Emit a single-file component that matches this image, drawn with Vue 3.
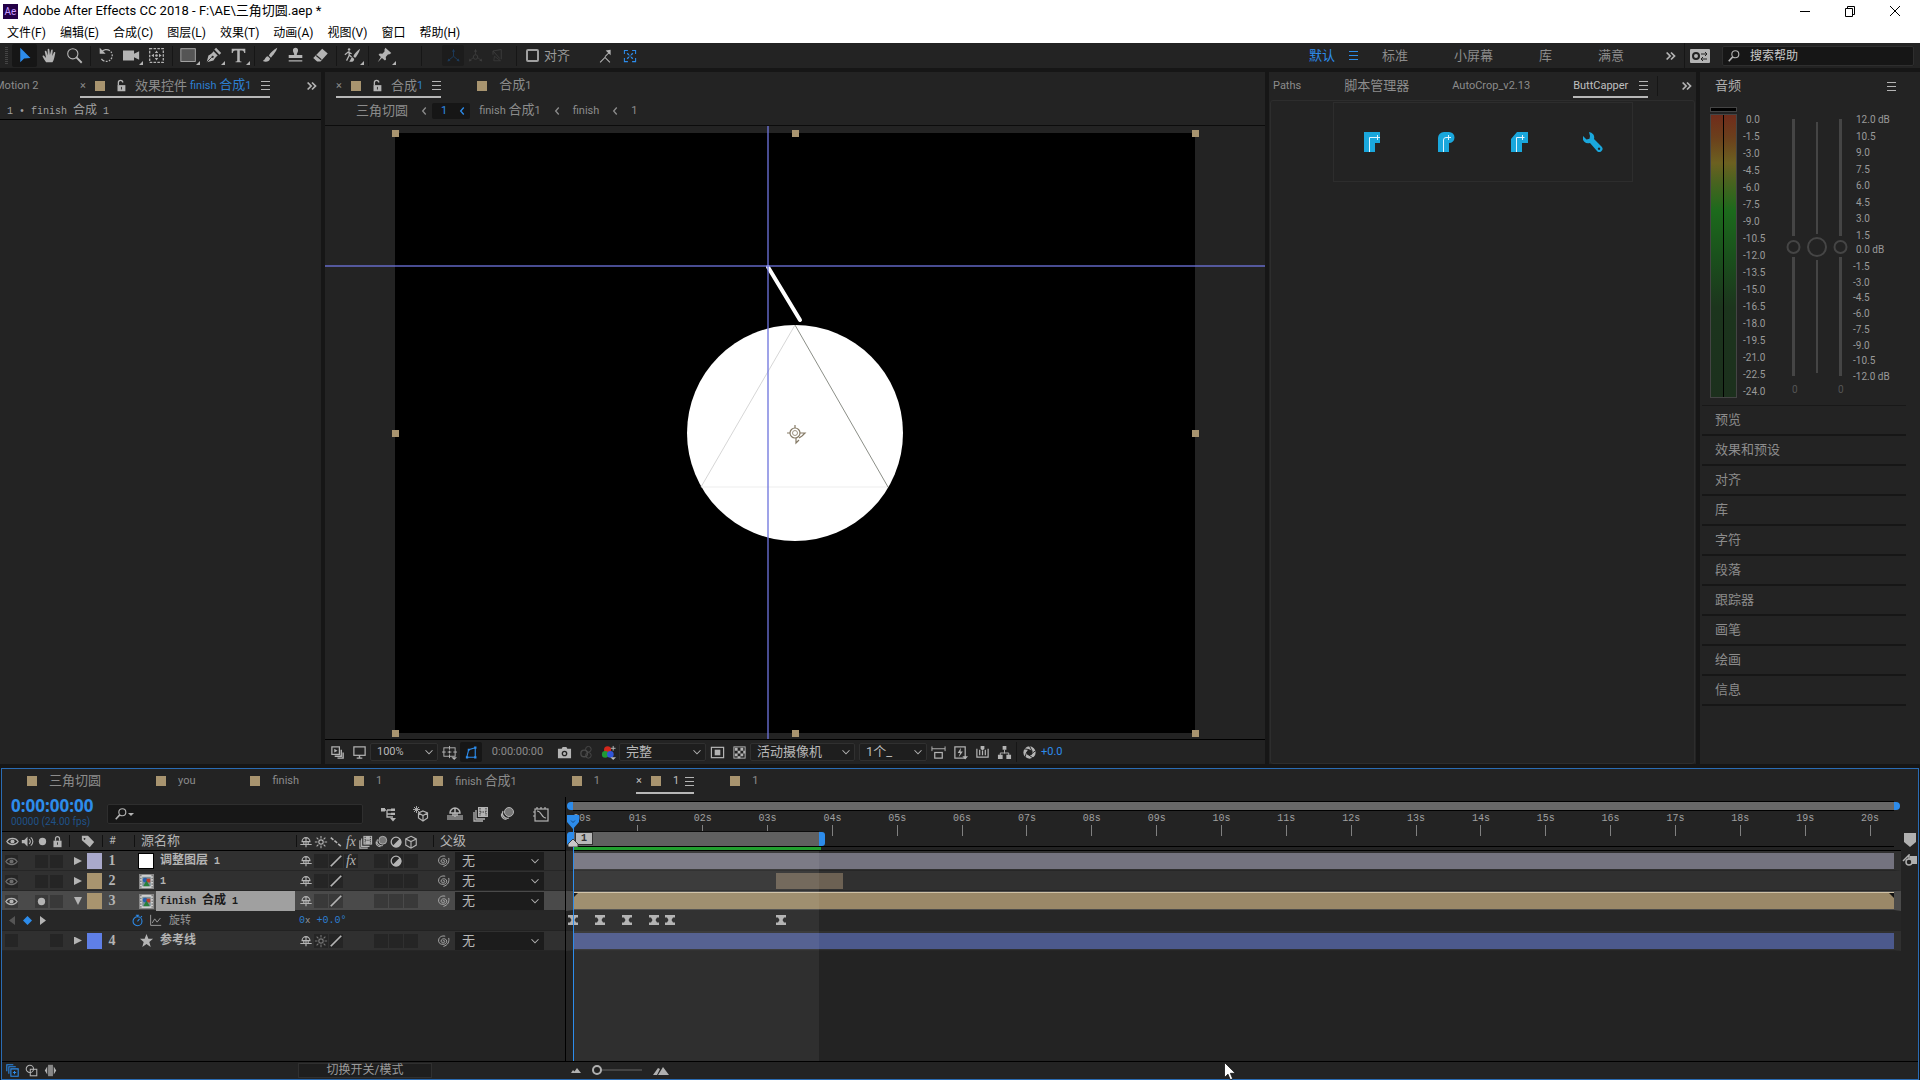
<script setup>
import { h, ref } from 'vue'

// 中文字符比西文大一号，拆开渲染
const Mix = (props) =>
  h(
    'span',
    { class: 'mix' },
    props.t
      .split(/([\u4e00-\u9fff]+)/)
      .filter(Boolean)
      .map((s) => h('span', { class: /[\u4e00-\u9fff]/.test(s) ? 'cn' : 'en' }, s))
  )
Mix.props = ['t']

const S = 'fill="none" stroke="currentColor"'

// 20x20 工具栏图标
const tools = {
  arrow: '<path d="M5 1v17l4.500-4.500 7.500-.5z" fill="currentColor"/>',
  hand: '<path d="M6 18c-1.500-2-3-4.500-4-6.500-.6-1.200.8-2 1.800-.9L6 13 4.500 5.500c-.2-1.300 1.500-1.600 1.900-.4L8 10 7.800 3c0-1.300 1.900-1.300 2 0L10.500 9.500 12 3.600c.3-1.200 2-.9 1.800.3L13.200 10.500l1.900-4c.5-1 2-.5 1.700.6-.7 3-1.300 8-3.300 10.900z" fill="currentColor"/>',
  zoom: `<circle cx="8" cy="8" r="6" ${S} stroke-width="1.300"/><path d="M12 12l6.500 6.500" ${S} stroke-width="2.200"/>`,
  rotate: `<path d="M4 6a7 7 0 1 1 0 8" ${S} stroke-width="1.500" stroke-dasharray="11 1.500 2 1.500 2 1.500 2 1.500 2 1.500 2 1.500"/><path d="M2 1v7h7z" fill="currentColor"/>`,
  camera: '<path d="M0 4h13v4l6-3v10l-6-3v4H0z" fill="currentColor"/>',
  pan: `<rect x="2" y="2" width="16" height="16" ${S} stroke-width="1.500" stroke-dasharray="3 1.500"/><path d="M10 4l2 3H8zM10 16l2-3H8zM4 10l3-2v4zM16 10l-3-2v4z" fill="currentColor"/><circle cx="10" cy="10" r="1.500" fill="currentColor"/>`,
  rect: `<rect x="1" y="2" width="17" height="15" fill="#555" stroke="currentColor"/>`,
  pen: `<path d="M2 18l2-8c2-1 5-3 6-5l5 5c-2 1-4 4-5 6z" fill="currentColor"/><path d="M11 3l2-2 6 6-2 2z" fill="currentColor"/><path d="M2 18l6-6" stroke="#232323" fill="none"/><circle cx="9" cy="11.500" r="1.300" fill="#232323"/>`,
  type: '<path d="M2 2h16v5h-1.300c-.3-2-.8-3-2.700-3h-2.500v11.500c0 1 .5 1.300 2 1.500v1h-7v-1c1.500-.2 2-.5 2-1.500V4H6C4 4 3.600 5 3.300 7H2z" fill="currentColor"/>',
  brush: '<path d="M18 1c-4 2-8 6-10 9l2.500 2.500C13 10 17 5 18 1zM7 11c-3 0-3 4-6 5.500 3 1.500 8 1 8.500-3z" fill="currentColor"/>',
  stamp: '<path d="M10 1a3 3 0 0 1 3 3c0 2-1.500 3-1.500 5.500H18V13H2V9.500h6.500C8.500 7 7 6 7 4a3 3 0 0 1 3-3zM2 15.500h16V17H2z" fill="currentColor"/>',
  eraser: '<path d="M12 2l6.500 5.500L10 17H6l-4.500-4z" fill="currentColor"/><path d="M5 10l6 5" stroke="#232323" fill="none" stroke-width="1.300"/>',
  roto: `<path d="M19 2c-3 2-7 6-8 9l2 2C15 11 18 6 19 2zM10 12c-2 0-2 4-4 5 3 1 6 0 6-3z" fill="currentColor"/><circle cx="6" cy="3" r="1.500" fill="currentColor"/><path d="M6 5v5l-3 6M6 9l3 3M1 9l4-3 4 2" ${S} stroke-width="1.500"/>`,
  pin: '<path d="M11 1l7 6-2 1.500-2 .2-2.500 3 .3 3L10.500 16 7 13l-5 5 3.700-6.200L3 9l1.500-1.300 3 .3L10 5.200V3z" fill="currentColor"/>',
  axis1: `<path d="M10 3v8L4 16M10 11l6 5" ${S} stroke-width="1.300"/><path d="M10 1l2 4H8zM2 18l1-4 3 3zM18 18l-1-4-3 3z" fill="currentColor"/>`,
  axis2: `<circle cx="10" cy="12" r="3" ${S} stroke-width="1.300"/><path d="M10 9V4M7 13l-4 3M13 13l4 3" ${S}/><path d="M10 1l2 4H8zM1 18l1-4 3 3zM19 18l-1-4-3 3z" fill="currentColor"/>`,
  axis3: `<path d="M4 4l11-2v13M4 4v5M4 4l9 10" ${S} stroke-width="1.300"/><path d="M6 11l8 6-9 0z" ${S}/>`,
  snap1: `<path d="M3 19l7-7 7 7M10 11l6-6" ${S} stroke-width="1.500"/><path d="M18 1v8l-7-7z" fill="currentColor"/>`,
  snap2: `<path d="M2 7V2h5M13 2h5v5M18 13v5h-5M7 18H2v-5" ${S} stroke-width="1.500"/><path d="M6 6l2.500 2.500M14 6l-2.500 2.500M6 14l2.500-2.500M14 14l-2.500-2.500" ${S} stroke-width="1.800"/><circle cx="10" cy="10" r="1" fill="currentColor"/>`,
}

// 16x16 小图标
const icons = {
  search: `<circle cx="9.500" cy="6" r="4" ${S} stroke-width="1.300"/><path d="M6.500 9L2 14" ${S} stroke-width="1.800"/>`,
  lockOpen: `<path d="M5 7V4a2.500 2.500 0 0 1 5 0" ${S} stroke-width="1.500"/><rect x="4" y="7" width="9" height="7" fill="currentColor"/><path d="M8.500 9v3" stroke="#232323"/>`,
  lock: `<path d="M5.500 7V4.500a2.500 2.500 0 0 1 5 0V7" ${S} stroke-width="1.500"/><rect x="3" y="7" width="10" height="8" fill="currentColor"/><path d="M8 9v3" stroke="#232323"/>`,
  more: `<path d="M3 4l4 4-4 4M8 4l4 4-4 4" ${S} stroke-width="2"/>`,
  left: `<path d="M10 4L6.500 8l3.500 4" ${S} stroke-width="1.500"/>`,
  down: `<path d="M4 6l4 4 4-4" ${S} stroke-width="1.200"/>`,
  always: `<rect x="2" y="2" width="8" height="8" ${S} stroke-width="1.300"/><path d="M12 5v7H5M14 8v6H8" ${S} stroke-width="1.500"/><path d="M4.500 4v4l3.500-2z" fill="currentColor"/>`,
  monitor: `<rect x="2" y="2" width="12" height="9" ${S} stroke-width="1.300"/><path d="M5 14h6M8 11v3" ${S} stroke-width="1.500"/>`,
  grid: `<rect x="2" y="3" width="12" height="9" ${S}/><path d="M8 1v4M8 10v4M0 7.500h4M12 7.500h4M6 7.500h4M8 6v3" ${S}/><path d="M10 13h6l-3 3z" fill="currentColor"/>`,
  mask: `<path d="M3 13l2-8 7-2v10z" ${S} stroke-width="1.200"/><path d="M2 12h2.500v2.500H2zM10.800 1.500h2.500V4h-2.500zM10.800 12h2.500v2.500h-2.500zM4 4h2v2H4z" fill="currentColor"/>`,
  photo: '<path d="M1 4h4l1-2h4l1 2h4v10H1z" fill="currentColor"/><circle cx="8" cy="9" r="3" fill="#232323"/><circle cx="8" cy="9" r="1.600" fill="currentColor"/>',
  ghost: `<circle cx="10" cy="4.500" r="3" ${S}/><circle cx="5.500" cy="9" r="3.500" ${S} stroke-width="1.500"/><circle cx="10" cy="11" r="3" ${S}/>`,
  rgb: '<circle cx="7" cy="5" r="3.800" fill="#d4281c"/><circle cx="4.500" cy="10" r="3.500" fill="#1f9a35"/><circle cx="10" cy="10" r="3.500" fill="#3155d8"/><path d="M13 1v5M10.500 3.500h5" stroke="#bbb"/><path d="M10 13h6l-3 3z" fill="#bbb"/>',
  roi: `<rect x="1.500" y="2.500" width="13" height="11" ${S} stroke-width="1.300"/><rect x="5" y="5" width="6" height="6" fill="currentColor"/>`,
  checker: `<rect x="2" y="2" width="12" height="12" ${S}/><path d="M3 3h3v3H3zM9 3h3v3H9zM6 6h3v3H6zM12 6h2v3h-2zM3 9h3v3H3zM9 9h3v3H9zM6 12h3v2H6z" fill="currentColor"/>`,
  aspect: `<path d="M1 4h14M1 1.500v5M15 1.500v5" ${S}/><rect x="4" y="8" width="8" height="6" ${S} stroke-width="1.300"/>`,
  fast: `<rect x="2" y="2" width="11" height="12" ${S} stroke-width="1.300"/><path d="M8.500 3L5 8.500h2.500L6 13l4.500-6H8z" fill="currentColor"/><path d="M10 12h6l-3 3.500z" fill="currentColor"/>`,
  timelineBtn: `<path d="M2 4v9h12V4M5 5v6M8 6v5M11 5v6" ${S} stroke-width="1.300"/><path d="M6 1h4v3L8 6 6 4z" fill="currentColor"/>`,
  flow: `<path d="M8 5v4M3.500 11V8.500h9V11" ${S}/><path d="M6 1h4v4H6zM1 10.500h5v4.500H1zM10 10.500h5v4.500h-5z" fill="currentColor"/>`,
  shutter: `<circle cx="8" cy="8" r="4.800" ${S} stroke-width="3.500"/><path d="M8 1l3 6M14.500 6l-5 4M12 14l-5-3.500M3 13.500l2-6M2 4l6 1" stroke="#232323"/>`,
  treeBtn: `<path d="M1 4h5M7 4h7M7 4v7h6M7 8h6" ${S} stroke-width="1.300"/><path d="M1 2h4v3.500H1zM11 2.500h4V5h-4zM11 6.700h4V9h-4z" fill="currentColor"/><path d="M10 12h6l-3 3.500z" fill="currentColor"/>`,
  draft3d: `<path d="M10 5l4.500 2v5L10 15l-4.500-3V7zM5.500 7L10 9.500 14.500 7M10 9.500V15" ${S} stroke-width="1.200"/><path d="M3.500 0v7M0 3.500h7M1 1l5 5M6 1L1 6" ${S} stroke-width=".9"/>`,
  shyBig: `<path d="M3 7a5 5 0 0 1 10 0zM8 2v9M6 7v3M10 7v3" ${S} stroke-width="1.500"/><rect x="0" y="9" width="16" height="5" fill="currentColor" opacity=".6"/>`,
  blend: `<path d="M5 1h10v10H5z" fill="currentColor"/><path d="M3 4v9h9M1 6v9h9" ${S} stroke-width="1.300"/><path d="M7 2v8M13 2v8M7 6h6" stroke="#333" stroke-dasharray="1.500 1"/>`,
  blur: `<circle cx="10" cy="6" r="4.500" fill="#777" stroke="currentColor"/><path d="M4 5a5 5 0 0 0 6 7M2.500 7.500a5 5 0 0 0 5 6" ${S} stroke-width="1.200"/>`,
  graph: `<rect x="2" y="3" width="13" height="12" ${S} stroke-width="1.200"/><path d="M4 5c5 0 4 7 9 7M4 1v2M8 1v2M12 1v2M0 6h2M0 10h2" ${S} stroke-width="1.200"/>`,
  eye: `<path d="M1 8c3-5 11-5 14 0-3 5-11 5-14 0z" ${S} stroke-width="1.500"/><circle cx="8" cy="8" r="2.500" fill="currentColor"/>`,
  sound: `<path d="M1 6h3l4-4v12l-4-4H1z" fill="currentColor"/><path d="M10 5c2 2 2 4 0 6M12 3c3.500 3 3.500 7 0 10" ${S} stroke-width="1.300"/>`,
  dot: '<circle cx="8" cy="8" r="4.500" fill="currentColor"/>',
  tag: '<path d="M1 2h7l7 7-5 6-9-8zM4 4.500a1 1 0 1 0 .1 0z" fill="currentColor" fill-rule="evenodd"/>',
  shy: `<path d="M3.500 7.500a4.500 4.500 0 0 1 9 0zM8 3v11M5.500 8v2.500M10.500 8v2.500M1.500 10.800h13" ${S} stroke-width="1.300"/>`,
  sun: `<circle cx="8" cy="8" r="2.500" ${S} stroke-width="1.300"/><path d="M8 1v3M8 12v3M1 8h3M12 8h3M3 3l2 2M11 11l2 2M13 3l-2 2M5 11l-2 2" ${S} stroke-width="1.200"/>`,
  dash: `<path d="M2 3l12 10" ${S} stroke-width="1.800" stroke-dasharray="4 1.500"/>`,
  slash: `<path d="M2 14L14 2" ${S} stroke-width="2"/>`,
  adjust: `<circle cx="8" cy="8" r="5.500" ${S} stroke-width="1.500"/><path d="M12.500 4A6 6 0 0 1 4 12.500z" fill="currentColor"/>`,
  cube: `<path d="M8 1.500l6 3v7l-6 3.500-6-3.500v-7zM2 4.500l6 3 6-3M8 7.500V15" ${S} stroke-width="1.300"/>`,
  spiral: `<path d="M8 8.500c-.3-1.600 2-1.600 2 0 0 2.200-4.200 2.200-4.200-.5C5.800 4.800 12 4.300 12.200 8.300 12.300 13 3.800 13 3 8.500 2.300 3.500 7 1.500 10.500 2.500M14.500 4.500c1 4-1 8.500-6 9.700" ${S}/>`,
  comp: `<rect x=".5" y=".5" width="15" height="15" fill="#cfcfcf" stroke="#888"/><path d="M2 1v14M14 1v14" stroke="#444" stroke-dasharray="1.500 1.500"/><rect x="3.500" y="3" width="9" height="10" fill="#7a8f99"/><circle cx="6.500" cy="6.500" r="2.500" fill="#2b5fae"/><path d="M8 5h4v4H8z" fill="#b8402c"/><path d="M8 7l3.500 6h-7z" fill="#27803b"/>`,
  star: '<path d="M8 1l2 5h5l-4 3.500 1.500 5.500L8 11.800 3.500 15 5 9.500 1 6h5z" fill="currentColor"/>',
  watch: `<circle cx="8" cy="9" r="5.500" ${S} stroke-width="1.300"/><path d="M8 9l2.500-3M6 1.500h4M8 1.500v2M12 4l1.500-1.500" ${S} stroke-width="1.300"/>`,
  curve: `<path d="M2 1v13h13M4 11l3-5 3 4 4-5" ${S} stroke-width="1.200"/>`,
  toggle1: `<path d="M6 6h9v9H6z" ${S} stroke-width="1.300"/><path d="M3.500 12V3.500H12M1 9V1h8M8.500 10.500h4M10.500 8.500v4" ${S} stroke-width="1.300"/>`,
  toggle2: `<circle cx="6" cy="6" r="4.500" ${S} stroke-width="1.300"/><rect x="6.500" y="6.500" width="8" height="8" ${S} stroke-width="1.300"/>`,
  toggle3: '<path d="M5 1h6v14H5z" fill="currentColor" opacity=".7"/><path d="M4 3v10L1 8zM12 3v10l3-5z" fill="currentColor"/>',
}

const menus = ['文件(F)', '编辑(E)', '合成(C)', '图层(L)', '效果(T)', '动画(A)', '视图(V)', '窗口', '帮助(H)']
const toolGroups = [
  [['arrow', '选取', 0], ['hand', '手形', 0], ['zoom', '缩放', 0]],
  [['rotate', '旋转', 0], ['camera', '摄像机', 1], ['pan', '锚点', 0]],
  [['rect', '矩形', 1], ['pen', '钢笔', 1], ['type', '文字', 1]],
  [['brush', '画笔', 0], ['stamp', '仿制图章', 0], ['eraser', '橡皮擦', 0]],
  [['roto', 'Roto 笔刷', 1]],
  [['pin', '操控点', 1]],
]
const workspaces = ['标准', '小屏幕', '库', '满意']
const meterLabels = Array.from({ length: 17 }, (_, i) => (i * -1.5).toFixed(1).replace('-0.0', '0.0'))
const gainUp = ['12.0 dB', '10.5', '9.0', '7.5', '6.0', '4.5', '3.0', '1.5']
const gainDown = ['-1.5', '-3.0', '-4.5', '-6.0', '-7.5', '-9.0', '-10.5', '-12.0 dB']
const sections = ['预览', '效果和预设', '对齐', '库', '字符', '段落', '跟踪器', '画笔', '绘画', '信息']

const compTabs = ['三角切圆', 'you', 'finish', '1', 'finish 合成1', '1', '1', '1']
const activeTab = ref(6)

const handles = [[0, 0], [400, 0], [800, 0], [0, 300], [800, 300], [0, 600], [400, 600], [800, 600]]

// 时间轴总长（秒）
const duration = 20.37
const pct = (t) => (t / duration) * 100 + '%'
const seconds = Array.from({ length: 21 }, (_, i) => i)
const workEnd = 3.8
const keys = [0, 0.42, 0.83, 1.25, 1.5, 3.21]

const layers = [
  { n: 1, name: '调整图层 1', color: '#a9a9cb', bar: '#74737f', start: 0, end: duration, eye: 'dim', kind: 'solid', sw: ['shy', 'box', 'slash', 'fx', '', 'box', 'adjust', 'box'] },
  { n: 2, name: '1', color: '#a8946f', bar: '#6c6153', start: 3.13, end: 4.16, eye: 'dim', kind: 'comp', sw: ['shy', 'box', 'slash', '', '', 'box', 'box', 'box'] },
  { n: 3, name: 'finish 合成 1', color: '#a8946f', bar: '#9a8868', start: 0, end: duration, eye: 'on', solo: true, open: true, kind: 'comp', sw: ['shy', 'box', 'slash', '', '', 'box', 'box', 'box'] },
  { n: 4, name: '参考线', color: '#5f7fe6', bar: '#4c598c', start: 0, end: duration, eye: 'off', kind: 'star', sw: ['shy', 'sun', 'slash', '', '', 'box', 'box', 'box'] },
]
const headSwitches = ['shy', 'sun', 'dash', 'fx', 'blend', 'blur', 'adjust', 'cube']
</script>

<template>
  <div class="app">
    <header class="title">
      <span class="logo">Ae</span>
      <span class="title-text">Adobe After Effects CC 2018 - F:\AE\三角切圆.aep *</span>
      <div class="win">
        <button aria-label="最小化"><svg viewBox="0 0 12 12"><path d="M1 6.500h10" stroke="#000" /></svg></button>
        <button aria-label="还原"><svg viewBox="0 0 12 12"><path d="M1.500 3.500h7v8h-7zM3.500 3V1.500h7v8H9" fill="none" stroke="#000" /></svg></button>
        <button aria-label="关闭"><svg viewBox="0 0 12 12"><path d="M1 1l10 10M11 1L1 11" stroke="#000" /></svg></button>
      </div>
    </header>

    <nav class="menubar">
      <button v-for="m in menus" :key="m">{{ m }}</button>
    </nav>

    <div class="toolbar">
      <span class="grip"></span>
      <template v-for="(g, gi) in toolGroups" :key="gi">
        <span v-if="gi" class="sep"></span>
        <button v-for="t in g" :key="t[0]" class="tool" :class="{ active: t[0] === 'arrow' }" :aria-label="t[1]">
          <svg viewBox="0 0 20 20" v-html="tools[t[0]]"></svg>
          <i v-if="t[2]" class="corner"></i>
        </button>
      </template>
      <span class="sep wide"></span>
      <button class="axis boxed" aria-label="本地轴"><svg viewBox="0 0 20 20" v-html="tools.axis1"></svg></button>
      <button class="axis" aria-label="世界轴"><svg viewBox="0 0 20 20" v-html="tools.axis2"></svg></button>
      <button class="axis" aria-label="视图轴"><svg viewBox="0 0 20 20" v-html="tools.axis3"></svg></button>
      <span class="sep tail"></span>
      <label class="snap"><input type="checkbox" /><span class="cn">对齐</span></label>
      <button class="tool" aria-label="边缘对齐"><svg class="s14" viewBox="0 0 20 20" v-html="tools.snap1"></svg></button>
      <button class="tool blue" aria-label="特征对齐"><svg class="s14" viewBox="0 0 20 20" v-html="tools.snap2"></svg></button>

      <div class="spaces">
        <button class="cn current">默认</button>
        <span class="burger blue"></span>
        <button v-for="w in workspaces" :key="w" class="cn">{{ w }}</button>
      </div>
      <button class="chev" aria-label="更多工作区"><svg class="ic" viewBox="0 0 16 16" v-html="icons.more"></svg></button>
      <span class="sep full"></span>
      <button class="sync" aria-label="同步设置">
        <svg viewBox="0 0 20 14"><rect width="20" height="14" rx="1" fill="#b4b4b4" /><circle cx="6" cy="7" r="3" fill="none" stroke="#232323" stroke-width="2" /><path d="M11 5h6M15 3l2 2-2 2M17 10h-6M13 8l-2 2 2 2" fill="none" stroke="#232323" /></svg>
      </button>
      <label class="help">
        <svg class="ic" viewBox="0 0 16 16" v-html="icons.search"></svg>
        <input type="text" placeholder="搜索帮助" aria-label="搜索帮助" />
      </label>
    </div>

    <main class="panels">
      <section class="panel effects">
        <div class="tabs">
          <button class="ptab cut">Motion 2</button>
          <div class="ptab on">
            <span class="x">×</span><i class="sw"></i>
            <svg class="ic lk" viewBox="0 0 16 16" v-html="icons.lockOpen"></svg>
            <span class="cn">效果控件</span><Mix class="hi" t="finish 合成1" />
            <span class="burger"></span>
          </div>
          <button class="chev end" aria-label="更多面板"><svg class="ic" viewBox="0 0 16 16" v-html="icons.more"></svg></button>
        </div>
        <p class="fx-target"><Mix class="mono" t="1 • finish 合成 1" /></p>
      </section>

      <section class="panel viewer">
        <div class="tabs">
          <div class="ptab on">
            <span class="x">×</span><i class="sw"></i>
            <svg class="ic lk" viewBox="0 0 16 16" v-html="icons.lockOpen"></svg>
            <span class="cn">合成</span><b class="one">1</b>
            <span class="burger"></span>
          </div>
          <button class="ptab second"><i class="sw"></i><Mix t="合成1" /></button>
        </div>
        <nav class="crumbs">
          <a href="#" class="cn">三角切圆</a>
          <svg class="ic" viewBox="0 0 16 16" v-html="icons.left"></svg>
          <a href="#" class="here">1<svg class="ic" viewBox="0 0 16 16" v-html="icons.left"></svg></a>
          <a href="#"><Mix t="finish 合成1" /></a>
          <svg class="ic" viewBox="0 0 16 16" v-html="icons.left"></svg>
          <a href="#">finish</a>
          <svg class="ic" viewBox="0 0 16 16" v-html="icons.left"></svg>
          <a href="#">1</a>
        </nav>

        <div class="stage">
          <svg class="comp" viewBox="0 0 800 600">
            <rect width="800" height="600" fill="#000" />
            <circle cx="400" cy="300" r="108" fill="#fff" />
            <path d="M400 192L306 354" stroke="#ccc" stroke-width=".8" />
            <path d="M306 354h187" stroke="#e8e8e8" stroke-width=".8" />
            <path d="M400 192l93 162" stroke="#8c8f88" />
            <path d="M373 134l32 53" stroke="#fff" stroke-width="4" stroke-linecap="round" />
            <g fill="none" stroke="#857a66" stroke-width="1.200">
              <circle cx="400" cy="300" r="5" />
              <circle cx="400" cy="300" r="2.500" stroke-width=".8" />
              <path d="M400 292v3M392 300h3M405 300h5l-3 3M401 305v5l3-3M404 305l3-2" />
            </g>
            <rect v-for="(p, i) in handles" :key="i" :x="p[0] - 3" :y="p[1] - 3" width="7" height="7" fill="#a8946f" />
          </svg>
          <i class="guide v"></i>
          <i class="guide h"></i>
        </div>

        <div class="vbar">
          <button class="vb" aria-label="始终预览"><svg class="ic" viewBox="0 0 16 16" v-html="icons.always"></svg></button>
          <button class="vb" aria-label="主查看器"><svg class="ic" viewBox="0 0 16 16" v-html="icons.monitor"></svg></button>
          <div class="dd d1"><select aria-label="放大率"><option>100%</option></select><svg class="ic" viewBox="0 0 16 16" v-html="icons.down"></svg></div>
          <button class="vb" aria-label="网格"><svg class="ic" viewBox="0 0 16 16" v-html="icons.grid"></svg></button>
          <button class="vb blue boxed" aria-label="蒙版"><svg class="ic" viewBox="0 0 16 16" v-html="icons.mask"></svg></button>
          <button class="vtime">0:00:00:00</button>
          <button class="vb" aria-label="快照"><svg class="ic" viewBox="0 0 16 16" v-html="icons.photo"></svg></button>
          <button class="vb dim" aria-label="显示快照"><svg class="ic" viewBox="0 0 16 16" v-html="icons.ghost"></svg></button>
          <button class="vb" aria-label="通道"><svg class="ic" viewBox="0 0 16 16" v-html="icons.rgb"></svg></button>
          <div class="dd d2"><select class="cn" aria-label="分辨率"><option>完整</option></select><svg class="ic" viewBox="0 0 16 16" v-html="icons.down"></svg></div>
          <button class="vb" aria-label="目标区域"><svg class="ic" viewBox="0 0 16 16" v-html="icons.roi"></svg></button>
          <button class="vb" aria-label="透明网格"><svg class="ic" viewBox="0 0 16 16" v-html="icons.checker"></svg></button>
          <div class="dd d3"><select class="cn" aria-label="3D 视图"><option>活动摄像机</option></select><svg class="ic" viewBox="0 0 16 16" v-html="icons.down"></svg></div>
          <div class="dd d1"><select class="cn" aria-label="视图布局"><option>1个_</option></select><svg class="ic" viewBox="0 0 16 16" v-html="icons.down"></svg></div>
          <button v-for="n in ['aspect', 'fast', 'timelineBtn', 'flow']" :key="n" class="vb" :aria-label="n"><svg class="ic" viewBox="0 0 16 16" v-html="icons[n]"></svg></button>
          <span class="sep"></span>
          <button class="vb" aria-label="重置曝光度"><svg class="ic" viewBox="0 0 16 16" v-html="icons.shutter"></svg></button>
          <button class="exposure">+0.0</button>
        </div>
      </section>

      <section class="panel scripts">
        <div class="tabs">
          <button class="ptab">Paths</button>
          <button class="ptab cn">脚本管理器</button>
          <button class="ptab">AutoCrop_v2.13</button>
          <div class="ptab on lit">ButtCapper<span class="burger"></span></div>
          <span class="tsep"></span>
          <button class="chev end" aria-label="更多面板"><svg class="ic" viewBox="0 0 16 16" v-html="icons.more"></svg></button>
        </div>
        <div class="script-body">
          <div class="caps">
            <button aria-label="平头端点"><svg viewBox="0 0 20 20"><path d="M2 0h16v11h-5v9H2z" fill="#1aa7dc" /><path d="M7.500 20V5.500H18M15.500 3v5" fill="none" stroke="#dff4ff" /></svg></button>
            <button aria-label="圆头端点"><svg viewBox="0 0 20 20"><path d="M2 20V6a6 6 0 0 1 6-6h5a5.500 5.500 0 0 1 0 11v9z" fill="#1aa7dc" /><path d="M7.500 20V8q0-2.500 2.500-2.500h5M12.500 3v5" fill="none" stroke="#dff4ff" /></svg></button>
            <button aria-label="斜角端点"><svg viewBox="0 0 20 20"><path d="M2 20V7l6-7h11v11h-6v9z" fill="#1aa7dc" /><path d="M7.500 20V5.500h8M13.500 3v5" fill="none" stroke="#dff4ff" /></svg></button>
            <button aria-label="设置"><svg viewBox="0 0 20 20"><path d="M6 0a5.500 5.500 0 0 1 5 7l7.500 7.500a3 3 0 0 1-4.500 4.500L7 11A5.500 5.500 0 0 1 0 4l3.500 3.500 3-.8L7 4zM16 15.500a1.200 1.200 0 1 0 .1 0z" fill="#1aa7dc" fill-rule="evenodd" /></svg></button>
          </div>
        </div>
      </section>

      <section class="panel side">
        <div class="tabs">
          <h2 class="cn">音频</h2>
          <span class="burger"></span>
        </div>
        <div class="audio">
          <div class="meter"><i class="clip"></i><i class="level"></i></div>
          <ul class="scale"><li v-for="l in meterLabels" :key="l">{{ l }}</li></ul>
          <svg class="faders" viewBox="0 0 70 284">
            <g stroke="#454545" fill="none">
              <path d="M10.500 5v117M10.500 143v119M57.500 5v117M57.500 143v119" stroke-width="3" />
              <path d="M34 8v112M34 146v113" stroke-width="2" />
              <circle cx="10.500" cy="133" r="6" stroke-width="2" />
              <circle cx="57.500" cy="133" r="6" stroke-width="2" />
              <circle cx="34" cy="133" r="9" stroke-width="2" />
            </g>
            <g class="zero"><text x="9" y="279">0</text><text x="55" y="279">0</text></g>
          </svg>
          <div class="gain">
            <ul class="up"><li v-for="l in gainUp" :key="l">{{ l }}</li></ul>
            <span>0.0 dB</span>
            <ul class="down"><li v-for="l in gainDown" :key="l">{{ l }}</li></ul>
          </div>
        </div>
        <div class="folded">
          <button v-for="s in sections" :key="s" class="cn">{{ s }}</button>
        </div>
      </section>
    </main>

    <section class="timeline">
      <div class="ctabs">
        <button v-for="(t, i) in compTabs" :key="i" class="ctab" :class="{ on: i === activeTab, short: t.length === 1 }" @click="activeTab = i">
          <span class="x">{{ i === activeTab ? '×' : '' }}</span><i class="sw"></i><Mix :t="t" />
          <span v-if="i === activeTab" class="burger"></span>
        </button>
      </div>

      <div class="tbody">
        <div class="outline">
          <div class="strip">
            <div class="clock"><strong>0:00:00:00</strong><small>00000 (24.00 fps)</small></div>
            <label class="find">
              <svg class="ic" viewBox="0 0 16 16" v-html="icons.search"></svg><i class="caret"></i>
              <input type="text" aria-label="搜索图层" />
            </label>
            <button v-for="n in ['treeBtn', 'draft3d', 'shyBig', 'blend', 'blur', 'graph']" :key="n" class="sbtn" :class="n" :aria-label="n">
              <svg viewBox="0 0 16 16" v-html="icons[n]"></svg>
            </button>
          </div>

          <div class="cols head">
            <div class="av">
              <svg v-for="n in ['eye', 'sound', 'dot', 'lock']" :key="n" class="ic" viewBox="0 0 16 16" v-html="icons[n]"></svg>
            </div>
            <div class="c-tag"><svg class="ic" viewBox="0 0 16 16" v-html="icons.tag"></svg></div>
            <div class="c-num">#</div>
            <div class="c-name cn">源名称</div>
            <div class="switches">
              <span v-for="n in headSwitches" :key="n"><em v-if="n === 'fx'">fx</em><svg v-else class="ic" viewBox="0 0 16 16" v-html="icons[n]"></svg></span>
            </div>
            <div class="c-parent cn">父级</div>
          </div>

          <template v-for="l in layers" :key="l.n">
            <div class="cols row" :class="{ sel: l.open }">
              <div class="av">
                <span class="box"><svg v-if="l.eye !== 'off'" class="ic" :class="l.eye" viewBox="0 0 16 16" v-html="icons.eye"></svg></span>
                <span></span>
                <span :class="{ box: l.eye !== 'off' }"><svg v-if="l.solo" class="ic" viewBox="0 0 16 16" v-html="icons.dot"></svg></span>
                <span class="box"></span>
              </div>
              <button class="twirl" :class="{ open: l.open }" aria-label="展开"></button>
              <i class="label" :style="{ background: l.color }"></i>
              <b class="num">{{ l.n }}</b>
              <div class="kind">
                <i v-if="l.kind === 'solid'" class="solid"></i>
                <svg v-else viewBox="0 0 16 16" v-html="icons[l.kind]"></svg>
              </div>
              <div class="lname"><Mix class="mono" :t="l.name" /></div>
              <div class="switches">
                <span v-for="(s, i) in l.sw" :key="i" :class="{ box: s && s !== 'shy', dim: s === 'sun' }">
                  <em v-if="s === 'fx'">fx</em>
                  <svg v-else-if="icons[s]" class="ic" viewBox="0 0 16 16" v-html="icons[s]"></svg>
                </span>
              </div>
              <div class="parent">
                <svg class="ic" viewBox="0 0 16 16" v-html="icons.spiral"></svg>
                <div class="dd"><select class="cn" aria-label="父级"><option>无</option></select><svg class="ic" viewBox="0 0 16 16" v-html="icons.down"></svg></div>
              </div>
            </div>
            <div v-if="l.open" class="prop">
              <div class="nav"><i class="prev"></i><i class="diamond"></i><i class="next"></i></div>
              <svg class="ic blue" viewBox="0 0 16 16" v-html="icons.watch"></svg>
              <svg class="ic" viewBox="0 0 16 16" v-html="icons.curve"></svg>
              <span class="pname">旋转</span>
              <button class="pval">0<small>x</small> +0.0°</button>
            </div>
          </template>
        </div>

        <div class="time">
          <div class="navbar"><i class="cap l"></i><i class="cap r"></i></div>
          <div class="ruler">
            <span v-for="s in seconds" :key="s" class="mark" :class="{ first: s === 0 }" :style="{ left: pct(s) }">{{ String(s).padStart(2, '0') }}s</span>
          </div>
          <div class="work">
            <div class="area" :style="{ width: pct(workEnd) }"><i class="cap l"></i><i class="cap r"></i><b class="flag">1</b></div>
          </div>
          <div class="cache"><i :style="{ width: pct(workEnd) }"></i></div>
          <div class="tracks">
            <div class="lit" :style="{ width: pct(workEnd) }"></div>
            <template v-for="l in layers" :key="l.n">
              <div class="track" :class="{ sel: l.open }">
                <i class="bar" :style="{ left: pct(l.start), width: pct(l.end - l.start), background: l.bar }"></i>
              </div>
              <div v-if="l.open" class="track keys">
                <svg v-for="k in keys" :key="k" class="key" viewBox="0 0 10 10" :style="{ left: pct(k) }"><path d="M0 0h10v2.500H8L6.500 5 8 7.500h2V10H0V7.500h2L3.500 5 2 2.500H0z" fill="#b0b0b0" /></svg>
              </div>
            </template>
          </div>
          <div class="needle">
            <svg viewBox="0 0 14 14"><path d="M1 0h12v7l-6 7-6-7z" fill="#2d8ceb" /><path d="M5 5.500l2 2 2-2" fill="none" stroke="#164a80" /></svg>
          </div>
          <svg class="house" viewBox="0 0 12 8"><path d="M1 8V5l5-5 5 5v3z" fill="#c8c8c8" stroke="#232323" stroke-width=".8" /></svg>
        </div>

        <div class="gutter">
          <svg viewBox="0 0 12 14"><path d="M0 0h12v9l-6 5-6-5z" fill="#b0b0b0" /></svg>
          <svg viewBox="0 0 15 12"><path d="M8 2h7v8H8z" fill="#b0b0b0" /><path d="M1 7l6-6v4" fill="none" stroke="#b0b0b0" stroke-width="1.500" /><circle cx="7" cy="8" r="3" fill="#232323" stroke="#b0b0b0" stroke-width="1.500" /></svg>
        </div>
      </div>

      <footer class="foot">
        <div class="toggles">
          <button class="blue" aria-label="图层开关"><svg class="ic" viewBox="0 0 16 16" v-html="icons.toggle1"></svg></button>
          <button aria-label="转换控制"><svg class="ic" viewBox="0 0 16 16" v-html="icons.toggle2"></svg></button>
          <button aria-label="入点出点"><svg class="ic" viewBox="0 0 16 16" v-html="icons.toggle3"></svg></button>
        </div>
        <button class="mode">切换开关/模式</button>
        <div class="zoomer">
          <svg class="small" viewBox="0 0 10 6"><path d="M0 6l2-3 1.500 1.500L6 1l4 5z" fill="#b0b0b0" /></svg>
          <input type="range" min="0" max="100" value="0" aria-label="时间缩放" />
          <svg class="big" viewBox="0 0 16 9"><path d="M0 9l5-7 2 1-3 6zM5 9l5-8 6 8z" fill="#b0b0b0" /></svg>
        </div>
      </footer>
    </section>

    <svg class="cursor" viewBox="0 0 12 19"><path d="M.5.5v15l3.500-3.300 2.300 5.600 2.400-1-2.300-5.500h5z" fill="#fff" stroke="#111" stroke-width=".8" /></svg>
  </div>
</template>

<style>
body {
  background: #161616;
  overflow: hidden;
}

.mix {
  white-space: pre;
}

.cn {
  font-size: 13px;
}

.mono .en {
  font-family: 'Liberation Mono', monospace;
  font-size: 10px;
}

.mono .cn {
  font-size: 12px;
}
</style>

<style scoped>
.app {
  display: flex;
  flex-direction: column;
  height: 100vh;
  background: #161616;
  color: #8c8c8c;
  font-family: Roboto, 'Noto Sans CJK SC', sans-serif;
  font-size: 11px;
  line-height: 16px;
}

button,
input,
select {
  font-family: inherit;
  font-size: inherit;
  line-height: inherit;
  color: inherit;
  background: none;
  border: 0;
  padding: 0;
  margin: 0;
}

a {
  color: inherit;
  text-decoration: none;
}

ul,
p,
h2 {
  margin: 0;
  padding: 0;
  list-style: none;
  font-weight: 400;
}

svg {
  display: block;
  flex: none;
}

button.cn,
select.cn {
  font-size: 13px;
}

.ic {
  width: 14px;
  height: 14px;
}

.blue {
  color: #2d8ceb;
}

.dim {
  color: #4a4a4a;
}

/* 标题栏 */
.title {
  display: flex;
  align-items: center;
  height: 22px;
  padding: 0 19px 0 3px;
  background: #fff;
  color: #000;
  font-size: 13px;
}

.logo {
  width: 15px;
  height: 15px;
  margin-right: 5px;
  background: #240046;
  color: #c79bff;
  font-size: 10px;
  line-height: 15px;
  text-align: center;
}

.win {
  display: flex;
  gap: 33px;
  margin-left: auto;
}

.win svg {
  width: 12px;
  height: 12px;
}

.menubar {
  display: flex;
  gap: 14px;
  height: 21px;
  padding-left: 7px;
  background: #fff;
  color: #000;
  font-size: 12px;
}

/* 工具栏 */
.toolbar {
  display: flex;
  align-items: center;
  height: 25px;
  margin-bottom: 4px;
  padding: 0 6px 0 5px;
  background: #232323;
  color: #b4b4b4;
}

.grip {
  width: 3px;
  height: 18px;
  margin-right: 4px;
  background: repeating-linear-gradient(#444 0 1px, #232323 1px 2px);
}

.sep {
  flex: none;
  width: 1px;
  height: 20px;
  margin: 0 3px;
  background: #161616;
}

.sep.wide {
  margin: 0 20px 0 24px;
}

.sep.tail {
  margin: 0 9px 0 8px;
}

.sep.full {
  height: 25px;
  margin: 0 5px 0 6px;
}

.tool {
  position: relative;
  display: flex;
  justify-content: center;
  align-items: center;
  width: 25px;
  height: 23px;
}

.tool svg {
  width: 17px;
  height: 17px;
}

.tool .s14 {
  width: 14px;
  height: 14px;
}

.tool.active {
  background: #161616;
  border-radius: 2px;
  color: #2d8ceb;
}

.corner {
  position: absolute;
  right: 1px;
  bottom: 2px;
  border: 2px solid #b4b4b4;
  border-top-color: transparent;
  border-left-color: transparent;
}

.axis {
  display: flex;
  justify-content: center;
  align-items: center;
  width: 22px;
  height: 21px;
  color: #3c3c3c;
}

.axis svg {
  width: 15px;
  height: 15px;
}

.axis.boxed {
  background: #1c1c1c;
  border-radius: 2px;
  color: #1c3b5c;
}

.snap {
  display: flex;
  align-items: center;
  gap: 5px;
  margin-right: 22px;
  color: #9a9a9a;
}

.snap input {
  appearance: none;
  width: 13px;
  height: 13px;
  border: 2px solid #a0a0a0;
  border-radius: 2px;
}

.spaces {
  display: flex;
  align-items: center;
  gap: 46px;
  margin-left: auto;
  margin-right: 40px;
  color: #8c8c8c;
}

.spaces .current {
  margin-right: -32px;
  color: #2d8ceb;
}

.spaces .burger {
  margin: 0 -22px 0 0;
}

.burger {
  flex: none;
  width: 9px;
  height: 9px;
  background: repeating-linear-gradient(#b4b4b4 0 1px, transparent 1px 4px);
}

.burger.blue {
  background: repeating-linear-gradient(#2d8ceb 0 1px, transparent 1px 4px);
}

.chev {
  color: #b4b4b4;
}

.sync svg {
  width: 20px;
  height: 14px;
}

.help {
  display: flex;
  align-items: center;
  gap: 9px;
  width: 186px;
  height: 18px;
  margin-left: 12px;
  padding-left: 4px;
  border: 1px solid #2e2e2e;
  border-radius: 2px;
  background: #161616;
}

.help input {
  flex: 1;
  min-width: 0;
  font-size: 12px;
}

.help input::placeholder {
  color: #c8c8c8;
}

/* 上方面板 */
.panels {
  flex: 1;
  min-height: 0;
  display: flex;
  gap: 4px;
}

.panel {
  display: flex;
  flex-direction: column;
  min-width: 0;
  background: #232323;
}

.effects {
  width: 321px;
}

.viewer {
  flex: 1;
}

.scripts {
  width: 427px;
}

.side {
  width: 220px;
}

.tabs {
  display: flex;
  flex: none;
  align-items: center;
  height: 28px;
  overflow: hidden;
}

.ptab {
  display: flex;
  align-items: center;
  height: 28px;
  box-sizing: border-box;
  border-bottom: 2px solid transparent;
  margin-bottom: 2px;
  padding-top: 3px;
  white-space: nowrap;
}

.ptab.on,
.ctab.on {
  border-bottom-color: #b8b8b8;
}

.ptab.on {
  height: 26px;
}

.ptab .burger {
  margin-left: 9px;
}

.ctab .burger {
  margin-left: 6px;
}

.x {
  width: 15px;
  font-size: 11px;
  text-align: left;
}

.sw {
  flex: none;
  width: 10px;
  height: 10px;
  background: #a8946f;
}

.lk {
  margin: 0 7px 0 9px;
  color: #b4b4b4;
}

.cut {
  margin-left: -5px;
  width: 85px;
}

.hi {
  margin-left: 3px;
  color: #2d7fd2;
}

.one {
  color: #2d7fd2;
  font-weight: 400;
}

.end {
  margin-left: auto;
  padding-right: 2px;
}

.fx-target {
  height: 18px;
  padding: 1px 7px 0;
  border-bottom: 1px solid #000;
  line-height: 18px;
  color: #a0a0a0;
}

.viewer .tabs {
  padding-left: 11px;
}

.second {
  margin-left: 36px;
}

.second .sw {
  margin-right: 12px;
}

.crumbs {
  display: flex;
  flex: none;
  align-items: center;
  gap: 9px;
  height: 21px;
  padding: 0 31px 4px;
  border-bottom: 1px solid #0c0c0c;
}

.crumbs .here {
  display: flex;
  align-items: center;
  gap: 8px;
  padding: 0 1px 0 9px;
  margin-left: -8px;
  border-radius: 2px;
  background: #161616;
  color: #2d8ceb;
}

.stage {
  position: relative;
  flex: 1;
  min-height: 0;
  display: flex;
  justify-content: center;
  align-items: center;
  overflow: hidden;
  border-bottom: 1px solid #000;
}

.comp {
  width: 800px;
  height: 600px;
  overflow: visible;
}

.guide {
  position: absolute;
  background: rgba(110, 115, 220, 0.66);
}

.guide.v {
  top: 0;
  bottom: 0;
  left: calc(50% - 28px);
  width: 2px;
}

.guide.h {
  left: 0;
  right: 0;
  top: calc(50% - 168px);
  height: 2px;
}

.vbar {
  display: flex;
  flex: none;
  align-items: center;
  height: 24px;
  padding-left: 1px;
  color: #b4b4b4;
}

.vb {
  display: flex;
  justify-content: center;
  align-items: center;
  width: 22px;
  height: 20px;
}

.vb.boxed {
  background: #161616;
  border-radius: 2px;
}

.vbar .sep {
  margin: 0 1px;
}

.dd {
  position: relative;
  display: flex;
  align-items: center;
}

.dd select {
  appearance: none;
  width: 100%;
  height: 18px;
  padding-left: 6px;
  border: 1px solid #303030;
  border-radius: 2px;
  background: #1e1e1e;
  color: #b8b8b8;
}

.dd .ic {
  position: absolute;
  right: 2px;
  pointer-events: none;
}

.d1 {
  width: 68px;
}

.d2 {
  width: 87px;
}

.d3 {
  width: 105px;
  margin-right: 4px;
}

.vtime {
  width: 71px;
  color: #8c8c8c;
}

.vbar .vb .ic {
  width: 15px;
  height: 15px;
}

.exposure {
  margin-left: 1px;
  color: #2d8ceb;
}

/* 脚本面板 */
.scripts .tabs {
  gap: 43px;
  padding-left: 4px;
}

.lit.ptab {
  color: #c0c0c0;
}

.lit.ptab .burger {
  margin-left: 11px;
}

.tsep {
  width: 1px;
  height: 20px;
  margin: 0 -34px;
  background: #161616;
}

.script-body {
  flex: 1;
  display: flex;
  justify-content: center;
  align-items: flex-start;
  margin: 0 1px;
  padding-top: 1px;
  border: 1px solid #2d2d2d;
  border-radius: 3px;
}

.caps {
  display: flex;
  justify-content: space-around;
  align-items: center;
  width: 294px;
  height: 78px;
  padding: 0 2px;
  border: 1px solid #2d2d2d;
}

.caps svg {
  width: 20px;
  height: 20px;
}

/* 音频面板 */
.side .tabs {
  justify-content: space-between;
  padding: 0 24px 0 15px;
}

.side h2 {
  color: #b0b0b0;
}

.audio {
  display: flex;
  padding: 7px 0 7px 10px;
  font-size: 10px;
  line-height: 12px;
  color: #9a9a9a;
}

.meter {
  display: flex;
  flex-direction: column;
  gap: 2px;
  width: 27px;
  height: 291px;
}

.clip {
  height: 3px;
  border: 1px solid #444;
  background: #000;
}

.level {
  flex: 1;
  border: 1px solid #444;
  background:
    linear-gradient(90deg, transparent 12px, #000 12px 13px, transparent 13px),
    linear-gradient(#702c1b, #6b3f1c 8%, #6c6020 17%, #48631f 24%, #1c6a1c 34%, #1a511c 50%, #1c351d 68%, #1c301d);
}

.scale {
  display: flex;
  flex-direction: column;
  justify-content: space-between;
  width: 28px;
  height: 284px;
  margin: 7px 0 0 6px;
}

.scale li:first-child {
  padding-left: 3px;
}

.faders {
  width: 70px;
  height: 284px;
  margin: 7px 0 0 12px;
}

.zero {
  fill: #555;
  font-size: 10px;
}

.gain {
  width: 50px;
  margin: 5px 0 0;
}

.gain ul {
  display: flex;
  flex-direction: column;
  justify-content: space-around;
}

.up {
  height: 132px;
  padding-left: 3px;
}

.gain span {
  display: block;
  padding-left: 3px;
}

.down {
  height: 126px;
  margin-top: 3px;
}

.folded {
  display: flex;
  flex-direction: column;
  margin: 0 14px 0 2px;
  border-top: 1px solid #181818;
}

.folded button {
  height: 30px;
  padding: 0 13px;
  border-bottom: 2px solid #161616;
  text-align: left;
}

/* 时间轴 */
.timeline {
  flex: none;
  display: flex;
  flex-direction: column;
  box-sizing: border-box;
  height: 312px;
  margin: 4px 1px 0;
  padding-bottom: 1px;
  border: 1px solid #2a6cb4;
  background: #232323;
}

.ctabs {
  display: flex;
  gap: 21px;
  height: 28px;
  padding-left: 10px;
}

.ctab {
  display: flex;
  align-items: center;
  height: 25px;
  box-sizing: border-box;
  padding-top: 1px;
  padding-right: 19px;
  border-bottom: 2px solid transparent;
}

.ctab.short {
  padding-right: 15px;
}

.ctab .sw {
  margin-right: 12px;
}

.ctab.on {
  padding-right: 0;
  color: #c0c0c0;
}

.tbody {
  flex: 1;
  min-height: 0;
  display: flex;
}

.outline {
  flex: none;
  width: 563px;
  border-right: 1px solid #000;
}

.strip {
  display: flex;
  align-items: center;
  height: 34px;
  padding-left: 9px;
  color: #b4b4b4;
}

.clock {
  width: 96px;
  margin-top: -2px;
  color: #2d8ceb;
}

.clock strong {
  display: block;
  font-family: 'Noto Sans', sans-serif;
  font-size: 17px;
  line-height: 18px;
}

.clock small {
  display: block;
  font-size: 10px;
  line-height: 14px;
  color: #1f5288;
  white-space: nowrap;
}

.find {
  display: flex;
  align-items: center;
  width: 248px;
  height: 18px;
  margin-right: 12px;
  padding-left: 6px;
  border: 1px solid #2e2e2e;
  border-radius: 2px;
  background: #171717;
}

.find input {
  flex: 1;
  min-width: 0;
}

.caret {
  margin-top: 4px;
  border: 3px solid transparent;
  border-top-color: #b4b4b4;
}

.sbtn {
  display: flex;
  justify-content: center;
  width: 26px;
}

.sbtn svg {
  width: 16px;
  height: 16px;
}

.sbtn.draft3d {
  margin: 0 8px 0 7px;
}

.sbtn.graph {
  margin-left: 8px;
}

.cols {
  display: grid;
  grid-template-columns: 60px 22px 15px 20px 34px 143px 134px 1fr;
  align-items: center;
  box-sizing: border-box;
  height: 20px;
  padding-left: 3px;
}

.head {
  border-top: 1px solid #000;
  border-bottom: 1px solid #000;
  background: #2b2b2b;
  color: #b4b4b4;
}

.head .c-tag {
  grid-column: span 2;
  display: flex;
  justify-content: center;
  margin-left: 4px;
  padding-left: 4px;
}

.head > div + div {
  border-left: 1px solid #111;
  height: 12px;
  line-height: 12px;
  align-items: center;
}

.head .c-num {
  padding-left: 6px;
}

.head .c-name {
  grid-column: span 2;
  margin-left: 12px;
  padding-left: 6px;
}

.head .switches {
  margin-left: -3px;
  padding-left: 2px;
}

.c-parent {
  padding-left: 6px;
}

.row {
  border-bottom: 1px solid #262626;
  background: #303030;
  color: #b4b4b4;
}

.row.sel {
  background: #4a4a4a;
}

.av {
  display: grid;
  grid-template-columns: repeat(4, 15px);
  align-items: center;
}

.av .ic {
  width: 13px;
  height: 13px;
  justify-self: center;
}

.av .box,
.switches .box {
  background: rgba(0, 0, 0, 0.22);
}

.av > span {
  display: flex;
  justify-content: center;
  align-items: center;
  width: 13px;
  height: 13px;
}

.av .dim {
  color: #6c6c6c;
}

.twirl {
  justify-self: end;
  width: 8px;
  height: 8px;
  margin-right: 5px;
  background: #b4b4b4;
  clip-path: polygon(0 0, 100% 50%, 0 100%);
}

.twirl.open {
  clip-path: polygon(0 0, 100% 0, 50% 100%);
}

.label {
  width: 15px;
  height: 16px;
}

.num {
  font-family: 'Liberation Serif', serif;
  font-size: 14px;
  text-align: center;
}

.kind {
  justify-self: end;
  display: flex;
  align-items: center;
  justify-content: center;
  width: 16px;
  padding-right: 2px;
}

.kind svg {
  width: 15px;
  height: 15px;
}

.solid {
  width: 14px;
  height: 14px;
  border: 1px solid #000;
  background: #fff;
}

.lname {
  width: 135px;
  padding-left: 4px;
  line-height: 19px;
  font-weight: 700;
}

.sel .lname {
  background: #a0a0a0;
  color: #1a1a1a;
}

.switches {
  display: grid;
  grid-template-columns: repeat(8, 15px);
}

.switches span {
  display: flex;
  justify-content: center;
  align-items: center;
  width: 14px;
  height: 14px;
}

.switches .ic {
  width: 14px;
  height: 14px;
}

.switches .dim {
  color: #777;
}

em {
  font-family: 'Liberation Serif', serif;
  font-size: 14px;
  line-height: 12px;
}

.parent {
  display: flex;
  align-items: center;
  gap: 5px;
  padding-left: 3px;
}

.parent .dd {
  width: 89px;
}

.parent select {
  border-color: #1c1c1c;
  border-radius: 0;
  background: #1c1c1c;
}

.prop {
  display: flex;
  align-items: center;
  box-sizing: border-box;
  height: 20px;
  padding-left: 7px;
  background: #272727;
  border-bottom: 1px solid #222;
  color: #9a9a9a;
}

.nav {
  display: flex;
  align-items: center;
  gap: 8px;
  width: 122px;
}

.prev,
.next {
  width: 6px;
  height: 9px;
  background: #b4b4b4;
  clip-path: polygon(0 0, 100% 50%, 0 100%);
}

.prev {
  background: #555;
  clip-path: polygon(100% 0, 100% 100%, 0 50%);
}

.diamond {
  width: 9px;
  height: 9px;
  background: #2d8ceb;
  clip-path: polygon(50% 0, 100% 50%, 50% 100%, 0 50%);
}

.prop .ic {
  width: 13px;
  height: 13px;
  margin-right: 5px;
}

.pname {
  width: 130px;
  margin-left: 2px;
  font-size: 11px;
}

.pval {
  font-family: 'Liberation Mono', monospace;
  font-size: 10px;
  color: #2d7fd2;
}

.pval small {
  font-size: 9px;
  color: #9a9a9a;
}

/* 时间标尺与轨道 */
.time {
  position: relative;
  flex: 1;
  display: flex;
  flex-direction: column;
  min-width: 0;
  padding: 4px 7px 0;
}

.navbar {
  position: relative;
  box-sizing: border-box;
  height: 10px;
  border-top: 1px solid #000;
  border-bottom: 1px solid #000;
  background: #686868;
}

.cap {
  position: absolute;
  top: 0;
  bottom: 0;
  width: 6px;
  background: #2d8ceb;
}

.cap.l {
  right: 100%;
  border-radius: 6px 0 0 6px;
}

.cap.r {
  left: 100%;
  border-radius: 0 6px 6px 0;
}

.area .cap {
  border-radius: 0 3px 3px 0;
}

.area .cap.l {
  border-radius: 3px 0 0 3px;
}

.ruler {
  position: relative;
  height: 20px;
}

.mark {
  position: absolute;
  width: 30px;
  margin-left: -15px;
  font-family: 'Liberation Mono', monospace;
  font-size: 10px;
  text-align: center;
  color: #a0a0a0;
}

.mark::after {
  content: '';
  display: block;
  width: 1px;
  height: 11px;
  margin: -2px auto 0;
  background: #808080;
}

.mark.first {
  margin-left: 0;
  text-align: left;
}

.mark.first::after {
  display: none;
}

.work {
  position: relative;
  box-sizing: border-box;
  height: 16px;
  border-bottom: 1px solid #000;
}

.area {
  position: relative;
  box-sizing: border-box;
  height: 15px;
  border-top: 1px solid #0c0c0c;
  background: #606060;
}

.flag {
  display: block;
  width: 16px;
  height: 11px;
  margin-left: 2px;
  background: #b8b8b8;
  border: 1px solid #333;
  color: #333;
  font-family: 'Liberation Mono', monospace;
  font-size: 10px;
  line-height: 11px;
  text-align: center;
}

.cache {
  height: 3px;
  margin-right: -7px;
  border-bottom: 1px solid #000;
}

.cache i {
  display: block;
  height: 3px;
  background: #22a02f;
}

.tracks {
  position: relative;
  flex: 1;
}

.tracks .lit {
  position: absolute;
  z-index: 1;
  top: 0;
  bottom: 0;
  left: 0;
  background: rgba(255, 255, 255, 0.06);
}

.track {
  position: relative;
  box-sizing: border-box;
  height: 20px;
  margin: 0 -7px;
  border-right: 7px solid transparent;
  border-bottom: 1px solid #262626;
  border-left: 7px solid transparent;
  background: #303030;
}

.track.sel {
  background: #4a4a4a;
}

.track.keys {
  background: #262626;
}

.bar {
  position: absolute;
  top: 2px;
  height: 16px;
}

.sel .bar {
  box-sizing: border-box;
  top: 1px;
  height: 17px;
  border-top: 1px solid #d0c2a6;
}

.sel .bar::before,
.sel .bar::after {
  content: '';
  position: absolute;
  top: 0;
  left: 0;
  width: 5px;
  height: 5px;
  background: #111;
  clip-path: polygon(0 0, 100% 0, 0 100%);
}

.sel .bar::after {
  right: 0;
  left: auto;
  clip-path: polygon(0 0, 100% 0, 100% 100%);
}

.key {
  position: absolute;
  top: 4px;
  width: 10px;
  height: 10px;
  margin-left: -5px;
}

.needle {
  position: absolute;
  z-index: 2;
  top: 18px;
  bottom: 0;
  left: 0;
  width: 14px;
  background: linear-gradient(90deg, transparent 7px, #2d8ceb 7px 8px, transparent 8px);
}

.needle svg {
  width: 14px;
  height: 14px;
}

.house {
  position: absolute;
  z-index: 3;
  top: 42px;
  left: 1px;
  width: 12px;
  height: 8px;
}

.gutter {
  display: flex;
  flex-direction: column;
  align-items: center;
  gap: 7px;
  width: 17px;
  padding-top: 36px;
}

.gutter svg:first-child {
  width: 12px;
  height: 14px;
}

.gutter svg:last-child {
  width: 15px;
  height: 12px;
}

.foot {
  display: flex;
  align-items: center;
  height: 16px;
  color: #b4b4b4;
  border-top: 1px solid #000;
}

.toggles {
  display: flex;
  gap: 6px;
  width: 292px;
  padding-left: 4px;
}

.toggles .ic {
  width: 13px;
  height: 13px;
}

.mode {
  width: 134px;
  height: 15px;
  border: 1px solid #303030;
  background: #1e1e1e;
  font-size: 12px;
  line-height: 13px;
  color: #9a9a9a;
}

.zoomer {
  display: flex;
  align-items: center;
  gap: 11px;
  margin-left: 139px;
}

.small {
  width: 10px;
  height: 6px;
}

.big {
  width: 16px;
  height: 9px;
}

.zoomer input {
  appearance: none;
  width: 50px;
  height: 2px;
  background: #444;
}

.zoomer input::-webkit-slider-thumb {
  appearance: none;
  box-sizing: border-box;
  width: 10px;
  height: 10px;
  border: 2px solid #b0b0b0;
  border-radius: 50%;
  background: #232323;
}

.cursor {
  position: fixed;
  z-index: 10;
  top: 1062px;
  left: 1224px;
  width: 12px;
  height: 19px;
}
</style>
